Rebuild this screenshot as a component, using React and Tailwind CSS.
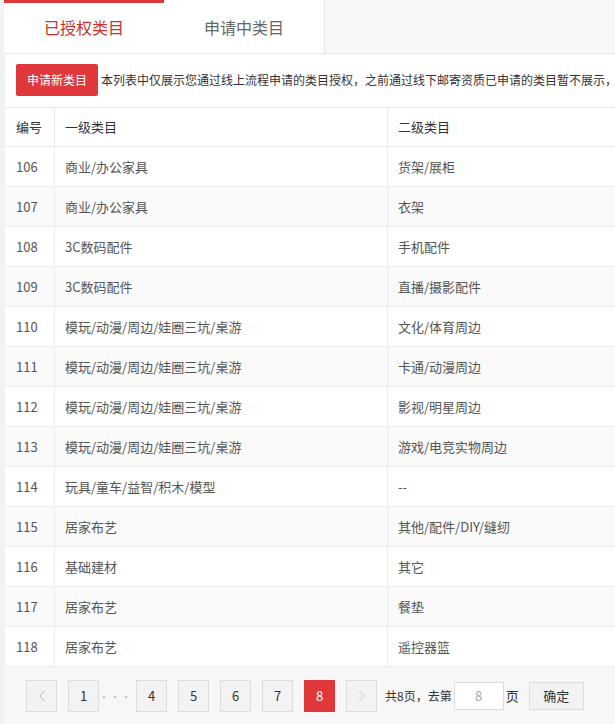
import { ChevronLeft, ChevronRight } from "lucide-react";

const rows = [
  ["106", "商业/办公家具", "货架/展柜"],
  ["107", "商业/办公家具", "衣架"],
  ["108", "3C数码配件", "手机配件"],
  ["109", "3C数码配件", "直播/摄影配件"],
  ["110", "模玩/动漫/周边/娃圈三坑/桌游", "文化/体育周边"],
  ["111", "模玩/动漫/周边/娃圈三坑/桌游", "卡通/动漫周边"],
  ["112", "模玩/动漫/周边/娃圈三坑/桌游", "影视/明星周边"],
  ["113", "模玩/动漫/周边/娃圈三坑/桌游", "游戏/电竞实物周边"],
  ["114", "玩具/童车/益智/积木/模型", "--"],
  ["115", "居家布艺", "其他/配件/DIY/缝纫"],
  ["116", "基础建材", "其它"],
  ["117", "居家布艺", "餐垫"],
  ["118", "居家布艺", "遥控器篮"],
];

function PageBtn({ children, active }) {
  return (
    <div
      className={
        active
          ? "w-[31px] h-[32px] flex items-center justify-center bg-[#e0373b] border border-[#e0373b] text-white text-[13px]"
          : "w-[31px] h-[32px] flex items-center justify-center bg-[#f3f3f3] border border-[#dcdcdc] text-[#333] text-[13px]"
      }
    >
      {children}
    </div>
  );
}

export default function App() {
  return (
    <div
      className="w-[615px] h-[724px] overflow-hidden bg-[#f2f2f2]"
      style={{ fontFamily: '"Noto Sans CJK SC", "Noto Sans", sans-serif' }}
    >
      {/* tabs */}
      <div className="ml-[4px] w-[800px] h-[54px] flex bg-[#f8f8f8] border-b border-[#e6e6e6]">
        <div className="w-[160px] bg-white border-t-[3px] border-[#e0373b] flex items-center justify-center text-[16px] text-[#c9302c] pb-[3px]">
          已授权类目
        </div>
        <div className="w-[161px] bg-white border-r border-[#e6e6e6] flex items-center justify-center text-[16px] text-[#666]">
          申请中类目
        </div>
      </div>

      {/* panel */}
      <div className="ml-[5px] w-[800px] bg-white">
        <div className="h-[53px] flex items-center pl-[11px] pb-[2px]">
          <button className="w-[82px] h-[32px] bg-[#e0373b] text-white text-[12px] rounded-[2px]">
            申请新类目
          </button>
          <span className="ml-[3px] text-[12px] text-[#333] whitespace-nowrap">
            本列表中仅展示您通过线上流程申请的类目授权，之前通过线下邮寄资质已申请的类目暂不展示，
          </span>
        </div>

        <div className="border-t border-[#e8e8e8]">
          <div className="flex h-[39px] border-b border-[#e8e8e8] text-[13px] text-[#333]">
            <div className="w-[50px] pl-[11px] flex items-center border-r border-[#e8e8e8]">编号</div>
            <div className="w-[333px] pl-[10px] flex items-center border-r border-[#e8e8e8]">一级类目</div>
            <div className="flex-1 pl-[10px] flex items-center">二级类目</div>
          </div>
          {rows.map((r, i) => (
            <div
              key={r[0]}
              className={
                "flex h-[40px] border-b border-[#ececec] text-[13px] text-[#555] " +
                (i % 2 === 1 ? "bg-[#fafafa]" : "bg-white")
              }
            >
              <div className="w-[50px] pl-[11px] flex items-center border-r border-[#ececec]">{r[0]}</div>
              <div className="w-[333px] pl-[10px] flex items-center border-r border-[#ececec]">{r[1]}</div>
              <div className="flex-1 pl-[10px] flex items-center">{r[2]}</div>
            </div>
          ))}
        </div>

        {/* pagination */}
        <div className="h-[60px] bg-[#f7f7f7] flex items-center pl-[21px] pb-[2px]">
          <PageBtn>
            <ChevronLeft size={18} strokeWidth={1} className="text-[#999]" />
          </PageBtn>
          <div className="ml-[11px]">
            <PageBtn>1</PageBtn>
          </div>
          <div className="w-[37px] text-center text-[#bbb] text-[10px] tracking-[1px]">····</div>
          <div className="flex gap-[11px]">
            <PageBtn>4</PageBtn>
            <PageBtn>5</PageBtn>
            <PageBtn>6</PageBtn>
            <PageBtn>7</PageBtn>
            <PageBtn active>8</PageBtn>
            <PageBtn>
              <ChevronRight size={18} strokeWidth={1} className="text-[#bbb]" />
            </PageBtn>
          </div>
          <span className="ml-[8px] text-[12px] text-[#333] whitespace-nowrap">共8页，去第</span>
          <div className="ml-[2px] w-[50px] h-[28px] bg-white border border-[#dcdcdc] flex items-center justify-center text-[13px] text-[#aaa]">
            8
          </div>
          <span className="ml-[2px] text-[13px] text-[#333]">页</span>
          <button className="ml-[10px] w-[55px] h-[28px] bg-[#f3f3f3] border border-[#dcdcdc] text-[13px] text-[#333]">
            确定
          </button>
        </div>
      </div>
    </div>
  );
}
